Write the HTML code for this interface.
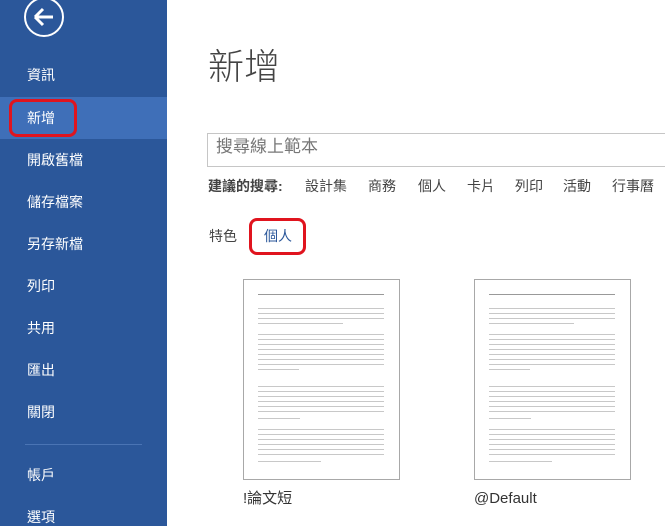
<!DOCTYPE html>
<html><head><meta charset="utf-8"><style>
*{margin:0;padding:0;box-sizing:border-box}
body{width:665px;height:526px;overflow:hidden;background:#fff;font-family:"Liberation Sans","Noto Sans CJK TC",sans-serif;position:relative}
.sb{position:absolute;left:0;top:0;width:167px;height:526px;background:#2b579a}
.it{position:absolute;left:27px;color:#fff;font-size:14px;line-height:20px}
.hl{position:absolute;left:0;top:97px;width:167px;height:42px;background:#3f6fb8}
.abs{position:absolute}
.t{color:#444;font-size:14px;line-height:18px;white-space:nowrap}
</style></head><body>
<div class="sb">
<svg class="abs" style="left:22px;top:-5px" width="44" height="44" viewBox="0 0 44 44"><circle cx="22" cy="22" r="19" fill="none" stroke="#fff" stroke-width="2"/><path d="M13 22H31M13 22L21 14M13 22L21 30" stroke="#fff" stroke-width="3" fill="none"/></svg>
<div class="hl"></div>
<div class="it" style="top:65px">資訊</div>
<div class="it" style="top:108px">新增</div>
<div class="it" style="top:150px">開啟舊檔</div>
<div class="it" style="top:192px">儲存檔案</div>
<div class="it" style="top:234px">另存新檔</div>
<div class="it" style="top:276px">列印</div>
<div class="it" style="top:318px">共用</div>
<div class="it" style="top:360px">匯出</div>
<div class="it" style="top:402px">關閉</div>
<div class="abs" style="left:25px;top:444px;width:117px;height:1px;background:#4a74b4"></div>
<div class="it" style="top:465px">帳戶</div>
<div class="it" style="top:507px">選項</div>
<div class="abs" style="left:9px;top:99px;width:68px;height:38px;border:3px solid #e0141e;border-radius:8px"></div>
</div>
<div class="abs" style="left:208px;top:44px;font-size:36px;line-height:46px;color:#444;font-weight:300">新增</div>
<div class="abs" style="left:207px;top:133px;width:470px;height:34px;border:1px solid #c6c6c6"></div>
<div class="abs" style="left:216px;top:137px;font-size:17px;line-height:20px;color:#777">搜尋線上範本</div>
<div class="abs t" style="left:208px;top:177px;font-weight:bold">建議的搜尋:</div>
<div class="abs t" style="left:305px;top:177px">設計集</div>
<div class="abs t" style="left:368px;top:177px">商務</div>
<div class="abs t" style="left:418px;top:177px">個人</div>
<div class="abs t" style="left:467px;top:177px">卡片</div>
<div class="abs t" style="left:515px;top:177px">列印</div>
<div class="abs t" style="left:563px;top:177px">活動</div>
<div class="abs t" style="left:612px;top:177px">行事曆</div>
<div class="abs t" style="left:209px;top:227px">特色</div>
<div class="abs t" style="left:264px;top:227px;color:#2b579a">個人</div>
<div class="abs" style="left:249px;top:218px;width:57px;height:37px;border:3px solid #e0141e;border-radius:8px"></div>
<svg class="abs" style="left:0;top:0" width="665" height="526">
<g id="d" stroke="#c8c8c8" stroke-width="1" fill="none">
<rect x="243.5" y="279.5" width="156" height="200" stroke="#a8a8a8"/>
<line x1="258" y1="294.5" x2="384" y2="294.5" stroke="#999"/>
<path d="M258 308.5H384M258 313.5H384M258 318.5H384M258 323.5H343M258 334.5H384M258 339.5H384M258 344.5H384M258 349.5H384M258 354.5H384M258 359.5H384M258 364.5H384M258 369.5H299M258 386.5H384M258 391.5H384M258 396.5H384M258 401.5H384M258 406.5H384M258 411.5H384M258 418.5H300M258 429.5H384M258 434.5H384M258 439.5H384M258 444.5H384M258 449.5H384M258 454.5H384M258 461.5H321"/>
</g>
<use href="#d" x="231"/>
</svg>
<div class="abs t" style="left:243px;top:490px;font-size:15px;color:#333">!論文短</div>
<div class="abs t" style="left:474px;top:490px;font-size:15px;color:#333">@Default</div>
</body></html>
